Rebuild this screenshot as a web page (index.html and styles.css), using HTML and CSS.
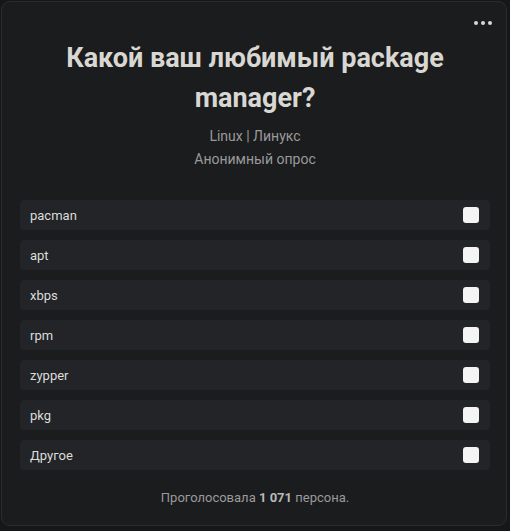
FILE: index.html
```html
<!DOCTYPE html>
<html lang="ru">
<head>
<meta charset="utf-8">
<link rel="stylesheet" href="styles.css">
</head>
<body>
<div class="card">
  <div class="menu"><span></span><span></span><span></span></div>
  <h1 class="title">Какой ваш любимый package manager?</h1>
  <div class="sub">Linux | Линукс</div>
  <div class="sub">Анонимный опрос</div>
  <div class="options">
    <label class="opt"><span>pacman</span><i class="box"></i></label>
    <label class="opt"><span>apt</span><i class="box"></i></label>
    <label class="opt"><span>xbps</span><i class="box"></i></label>
    <label class="opt"><span>rpm</span><i class="box"></i></label>
    <label class="opt"><span>zypper</span><i class="box"></i></label>
    <label class="opt"><span>pkg</span><i class="box"></i></label>
    <label class="opt"><span>Другое</span><i class="box"></i></label>
  </div>
  <div class="footer">Проголосовала <b>1 071</b> персона.</div>
</div>
</body>
</html>
```
FILE: styles.css
```css
html, body { margin: 0; padding: 0; }
body {
  background: #161719;
  font-family: Roboto, "Noto Sans", sans-serif;
  width: 510px;
  height: 531px;
  overflow: hidden;
}
.card {
  position: relative;
  box-sizing: border-box;
  margin: 1px 0 0 1px;
  width: 506px;
  height: 525px;
  background: #1b1c1e;
  border: 1px solid #2b2c2f;
  border-radius: 9px;
  padding: 36px 16px 0 18px;
}
.menu {
  position: absolute;
  top: 19px;
  right: 14px;
  display: flex;
  gap: 3px;
}
.menu span {
  width: 4px; height: 4px; border-radius: 50%;
  background: #d8d8d8;
}
.title {
  margin: 0 auto;
  width: 430px;
  text-align: center;
  color: #d9d7d2;
  font-size: 27px;
  line-height: 40px;
  font-weight: 700;
}
.sub {
  text-align: center;
  color: #9a9a9a;
  font-size: 14px;
  line-height: 23px;
}
.title + .sub { margin-top: 7px; }
.options {
  margin-top: 29px;
  display: flex;
  flex-direction: column;
  gap: 10px;
}
.opt {
  height: 30px;
  background: #222427;
  border-radius: 4px;
  display: flex;
  align-items: center;
  justify-content: space-between;
  padding: 0 11px 0 10px;
  color: #dcdcdc;
  font-size: 13px;
}
.box {
  width: 16px; height: 16px;
  background: #f4f4f4;
  border-radius: 3px;
}
.footer {
  margin-top: 20px;
  text-align: center;
  color: #9a9a9a;
  font-size: 13px;
}
.footer b { color: #b9b9b9; }
```
